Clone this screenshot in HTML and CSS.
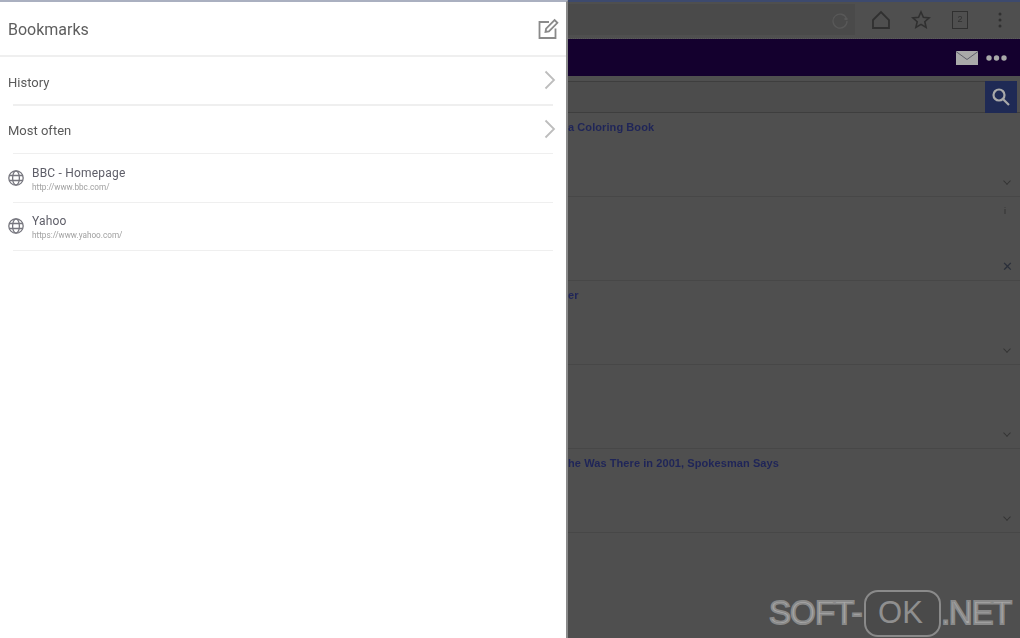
FILE: index.html
```html
<!DOCTYPE html>
<html lang="en">
<head>
<meta charset="utf-8">
<title>Bookmarks</title>
<link rel="stylesheet" href="styles.css">
</head>
<body>
<div class="page">
  <aside class="drawer">
    <header class="drawer-head">
      <h1 class="drawer-title">Bookmarks</h1>
      <svg class="edit-icon" width="22" height="22" viewBox="0 0 22 22" fill="none" stroke="#8a8a8a" stroke-width="1.800"><path d="M12 4H2.500v16h16v-9.500"/><path d="M8.500 14l.6-3.400L17.600 2l2.800 2.800-8.500 8.600z"/></svg>
    </header>
    <a class="nav-row">
      <span class="nav-label">History</span>
      <svg class="chev" width="12" height="20" viewBox="0 0 12 20" fill="none" stroke="#bdbdbd" stroke-width="1.800"><path d="M1.500 1.500L10 10l-8.500 8.500"/></svg>
    </a>
    <a class="nav-row">
      <span class="nav-label">Most often</span>
      <svg class="chev" width="12" height="20" viewBox="0 0 12 20" fill="none" stroke="#bdbdbd" stroke-width="1.800"><path d="M1.500 1.500L10 10l-8.500 8.500"/></svg>
    </a>
    <a class="bm-row">
      <svg class="globe" width="16" height="16" viewBox="0 0 16 16" fill="none" stroke="#77777f" stroke-width="1.300"><circle cx="8" cy="8" r="7.200"/><ellipse cx="8" cy="8" rx="3.400" ry="7.200"/><path d="M1.200 5.500h13.600M1.200 10.500h13.600"/></svg>
      <span class="bm-text"><span class="bm-title">BBC - Homepage</span><span class="bm-url">http://www.bbc.com/</span></span>
    </a>
    <a class="bm-row">
      <svg class="globe" width="16" height="16" viewBox="0 0 16 16" fill="none" stroke="#77777f" stroke-width="1.300"><circle cx="8" cy="8" r="7.200"/><ellipse cx="8" cy="8" rx="3.400" ry="7.200"/><path d="M1.200 5.500h13.600M1.200 10.500h13.600"/></svg>
      <span class="bm-text"><span class="bm-title">Yahoo</span><span class="bm-url">https://www.yahoo.com/</span></span>
    </a>
  </aside>
  <main class="behind">
    <div class="toolbar">
      <div class="address">
        <svg width="18" height="18" viewBox="0 0 18 18" fill="none" stroke="#585858" stroke-width="1.300"><path d="M15.500 7.500A7 7 0 1 0 16 10"/><path d="M13.500 8h3" stroke-width="2"/></svg>
      </div>
      <div class="tools">
        <svg width="20" height="20" viewBox="0 0 20 20" fill="none" stroke="#303030" stroke-width="1.800"><path d="M2 10L10 2l8 8v8H2z"/></svg>
        <svg width="20" height="20" viewBox="0 0 20 20" fill="none" stroke="#303030" stroke-width="1.600"><path d="M10 2l2.400 5.300 5.700.6-4.300 3.800 1.300 5.700L10 14.400l-5.100 3 1.300-5.700L1.900 7.900l5.700-.6z"/></svg>
        <span class="tab-count">2</span>
        <svg width="4" height="16" viewBox="0 0 4 16" fill="#303030"><circle cx="2" cy="2" r="1.500"/><circle cx="2" cy="8" r="1.500"/><circle cx="2" cy="14" r="1.500"/></svg>
      </div>
    </div>
    <div class="purple-bar">
      <svg width="22" height="14" viewBox="0 0 22 14"><path fill="#a9a9a9" d="M0 0h22v14H0z"/><path fill="none" stroke="#5f5f6a" stroke-width="1" d="M0 .5l11 8 11-8"/></svg>
      <svg width="21" height="6" viewBox="0 0 21 6" fill="#a9a9a9"><circle cx="3" cy="3" r="2.700"/><circle cx="10.500" cy="3" r="2.700"/><circle cx="18" cy="3" r="2.700"/></svg>
    </div>
    <div class="search">
      <div class="search-field"></div>
      <div class="search-btn">
        <svg width="20" height="20" viewBox="0 0 20 20" fill="none" stroke="#a9a9a9" stroke-width="2.200"><circle cx="8" cy="8" r="5.500"/><path d="M12 12l6 6"/></svg>
      </div>
    </div>
    <section class="story"><a class="headline">a Coloring Book</a><span class="more"></span></section>
    <section class="story"><span class="tag">i</span><span class="close">✕</span></section>
    <section class="story"><a class="headline">er</a><span class="more"></span></section>
    <section class="story"><span class="more"></span></section>
    <section class="story"><a class="headline">he Was There in 2001, Spokesman Says</a><span class="more"></span></section>
  </main>
</div>
<div class="watermark"><span class="wm-text wm-soft">SOFT-</span><span class="wm-box">OK</span><span class="wm-text wm-net">.NET</span></div>
</body>
</html>
```
FILE: styles.css
```css
* { box-sizing: border-box; }
html, body { margin: 0; height: 100%; overflow: hidden; background: #4f4f4f; }
.page {
  display: flex; width: 1032px; height: 650px; margin: -6px; padding: 6px;
  background: linear-gradient(90deg, #fff 574px, #4f4f4f 574px);
  filter: blur(0.75px);
}

.drawer {
  width: 568px; height: 638px; flex: none; background: #fff;
  border-top: 2px solid #aab0c0; border-right: 2px solid #8a8a8a;
  font-family: Roboto, "Liberation Sans", sans-serif; color: #5e5e5e;
}
.drawer-head {
  height: 55px; display: flex; align-items: center; justify-content: space-between;
  padding: 1px 7px 0 8px; border-bottom: 2px solid #efefef;
}
.drawer-title { margin: 0; font-size: 16px; font-weight: 400; color: #5e5e5e; }
.nav-row {
  height: 48.500px; display: flex; align-items: center; justify-content: space-between;
  padding: 0 10px 2px 8px; position: relative; font-size: 13px; color: #5a5a5a;
}
.nav-label { margin-top: 4px; }
.nav-row::after, .bm-row::after {
  content: ""; position: absolute; left: 13px; right: 13px; bottom: 0; height: 1.500px; background: #efefef;
}
.bm-row {
  height: 48px; display: flex; align-items: center; gap: 8px; padding: 0 8px; position: relative;
}
.bm-row:nth-of-type(3) { margin-top: 1px; }
.globe { flex: none; margin-top: -2px; }
.bm-text { display: flex; flex-direction: column; margin-top: 2px; }
.bm-title { font-size: 12px; line-height: 15px; color: #5e5e68; letter-spacing: .2px; }
.bm-url { font-size: 8.200px; line-height: 13px; color: #a0a0a0; }

.behind { flex: 1; min-width: 0; border-top: 2px solid #3d4a6e; font-family: "Liberation Sans", sans-serif; }
.toolbar { height: 37px; display: flex; background: #4f4f4f; border-bottom: 1px dotted #5b5b5b; }
.address {
  width: 287px; margin: 2px 0 3px; background: #4a4a4a; display: flex; align-items: center; justify-content: flex-end; padding-right: 6px;
}
.tools { flex: 1; display: flex; align-items: center; gap: 20px; padding-left: 16px; }
.tab-count {
  width: 16px; height: 18px; margin: 0 10px 0 1px; border: 1.500px solid #303030; font-size: 9px; line-height: 15px; text-align: center; color: #303030;
}
.purple-bar {
  height: 37px; background: #14002e; display: flex; align-items: center; justify-content: flex-end; gap: 8px; padding-right: 13px;
}
.search { height: 37px; padding: 5px 3px 0 0; display: flex; border-bottom: 1px solid #3e3e3e; }
.search-field { flex: 1; background: #4c4c4c; border-top: 1px solid #3e3e3e; }
.search-btn { width: 32px; margin-bottom: -1px; background: #1f2a55; display: flex; align-items: center; justify-content: center; }

.story { height: 84px; position: relative; border-bottom: 1px solid #474747; padding-top: 7px; }
.headline { display: block; font-size: 11px; line-height: 15px; font-weight: 700; letter-spacing: .08px; color: #1f2558; white-space: nowrap; }
.more {
  position: absolute; right: 10px; bottom: 12px; width: 6px; height: 6px;
  border-right: 1.500px solid #333; border-bottom: 1.500px solid #333; transform: rotate(45deg) scale(.9,.9);
}
.tag { position: absolute; right: 14px; top: 9px; font-size: 9px; color: #2f2f2f; }
.close { position: absolute; right: 7px; top: 63px; font-size: 13px; line-height: 14px; color: #2a2f3a; }

.watermark {
  position: absolute; left: 769px; top: 589px; display: flex; align-items: center;
  font-family: "Liberation Sans", sans-serif; height: 48px;
}
.wm-text { font-size: 33px; color: #a8a8a8; -webkit-text-stroke: 1.800px #8a8a8a; }
.wm-soft { width: 95px; letter-spacing: -.9px; }
.wm-net { letter-spacing: -1.300px; }
.wm-box {
  width: 77px; height: 47px; padding-right: 4px; border: 2.500px solid #8a8a8a; border-radius: 14px; background: #4a4a4a;
  font-size: 31px; line-height: 42px; text-align: center; color: #8f8f8f;
}
```
